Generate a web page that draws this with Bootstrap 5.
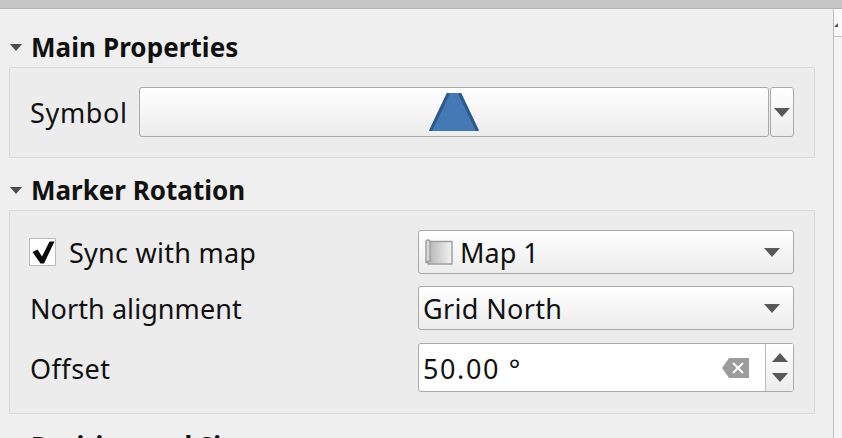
<!DOCTYPE html>
<html lang="en">
<head>
<meta charset="utf-8">
<title>Marker properties</title>
<link href="https://cdn.jsdelivr.net/npm/bootstrap@5.3.0/dist/css/bootstrap.min.css" rel="stylesheet">
<style>
html,body{height:438px;overflow:hidden}
body{background:#efefef;color:#111;font-family:"Noto Sans","Open Sans",sans-serif;font-size:27px;line-height:34px}
.topstrip{height:9px;background:#c6c6c6;border-bottom:1px solid #b4b4b4}
.sbar{width:9px;flex:none;border-left:1px solid #bdbdbd;background:#f4f4f4}
.sbar-btn{height:28px;border-bottom:1px solid #c4c4c4;background:#fafafa;padding:14px 0 0 0}
.sbar-btn i{display:block;width:0;height:0;border-left:4px solid transparent;border-bottom:4px solid #555}
.pane{padding:0 18px 0 9px;min-width:0;overflow:hidden}
.head{height:34px;font-weight:700;font-size:26px;line-height:34px;white-space:nowrap}
.head-a{margin-top:21px;margin-bottom:3px;letter-spacing:.08px}
.head-b{margin-top:15px;margin-bottom:3px}
.head-c{margin-top:15px;height:9px;overflow:hidden}
.tri{width:22px;flex:none;padding-left:1px}
.tri i{display:block;width:0;height:0;border-left:6px solid transparent;border-right:6px solid transparent;border-top:7px solid #4d4d4d}
.gbox{background:#ececec;border:1px solid #d9d9d9;border-radius:2px}
.gbox-a{height:91px;padding:19px 20px 0 19px}
.gbox-b{height:204px;padding:19px 20px 0 19px}
.lbl{width:389px;flex:none;white-space:nowrap;padding:2px 0 0 1px}
.lbl-flush{padding:0}
.lbl-sym{width:110px;flex:none;padding:2px 0 0 1px;letter-spacing:.65px}
.ls-sync{padding-top:2px;letter-spacing:.25px}
.ls-north{letter-spacing:.07px}
.ls-offset{letter-spacing:.5px}
.grad{background:linear-gradient(#fff,#ececec);border:1px solid #aaa;border-radius:3px}
.symbtn{height:50px;padding-top:5px}
.symbtn svg{display:block}
.symdrop{width:24px;height:50px;flex:none;margin-left:1px}
.tri-sm{display:block;flex:none;width:0;height:0;border-left:8px solid transparent;border-right:8px solid transparent;border-top:9px solid #595959}
.combo{height:44px;padding:0 5px 0 4px;white-space:nowrap}
.combotext{flex-grow:1;padding-top:2px}
.ls-grid{letter-spacing:.35px}
.mapico{flex:none;margin:0 7px 0 2px}
.spin{height:49px;background:#fff;border:1px solid #aaa;border-radius:3px}
.spin-val{padding:0 4px}
.spin-num{padding-top:2px;letter-spacing:1.6px}
.clearico{margin-right:12px}
.spin-arrows{width:28px;flex:none;border-left:1px solid #bbb;background:linear-gradient(#fff,#ececec);gap:11px}
.up{display:block;width:0;height:0;border-left:8px solid transparent;border-right:8px solid transparent;border-bottom:9px solid #595959}
.down{display:block;width:0;height:0;border-left:8px solid transparent;border-right:8px solid transparent;border-top:9px solid #595959}
.chk{width:27px;height:28px;flex:none;background:#fff;border:1px solid #bbb;margin-right:13px}
.rowb{height:44px}
.rowb + .rowb{margin-top:12px}
.rowc{height:49px;margin-top:13px}
</style>
</head>
<body>
<div class="topstrip"></div>
<div class="d-flex" style="height:429px">
  <div class="pane flex-grow-1">
    <div class="head head-a d-flex align-items-center"><span class="tri"><i></i></span>Main Properties</div>
    <div class="gbox gbox-a">
      <div class="d-flex align-items-center">
        <span class="lbl-sym">Symbol</span>
        <div class="grad symbtn flex-grow-1 d-flex justify-content-center">
          <svg width="50" height="38" viewBox="0 0 50 38"><path d="M18 0H32L50 38H0Z" fill="#4479b5"/><path d="M19.500 0L1.500 38M30.500 0L48.500 38" stroke="#2c5a8c" stroke-width="3" fill="none"/></svg>
        </div>
        <div class="grad symdrop d-flex align-items-center justify-content-center"><i class="tri-sm"></i></div>
      </div>
    </div>
    <div class="head head-b d-flex align-items-center"><span class="tri"><i></i></span>Marker Rotation</div>
    <div class="gbox gbox-b">
      <div class="rowb d-flex align-items-center">
        <div class="lbl lbl-flush d-flex align-items-center">
          <span class="chk d-flex align-items-center justify-content-center"><svg width="25" height="26" viewBox="0 0 25 26"><path d="M2.500 13L7.500 10.500L12 17.500L19.500 2.500H24.500L14 24.500H10.500Z" fill="#0a0a0a"/></svg></span><span class="ls-sync">Sync with map</span>
        </div>
        <div class="grad combo flex-grow-1 d-flex align-items-center">
          <svg width="28" height="27" viewBox="0 0 28 27" class="mapico"><defs><linearGradient id="mapg"><stop offset="0" stop-color="#b4b4b4"/><stop offset="1" stop-color="#f2f2f2"/></linearGradient></defs><rect x="3" y="2.500" width="24" height="22.500" fill="url(#mapg)" stroke="#a0a0a0" stroke-width="1.500"/><path d="M1 3Q1 1 3 1Q5 1 5 3V22Q2 22 1 24Z" fill="#d8d8d8" stroke="#a0a0a0" stroke-width="1.500"/></svg>
          <span class="combotext">Map 1</span><i class="tri-sm me-2"></i>
        </div>
      </div>
      <div class="rowb d-flex align-items-center">
        <div class="lbl ls-north">North alignment</div>
        <div class="grad combo flex-grow-1 d-flex align-items-center">
          <span class="combotext ls-grid">Grid North</span><i class="tri-sm me-2"></i>
        </div>
      </div>
      <div class="rowc d-flex align-items-center">
        <div class="lbl ls-offset">Offset</div>
        <div class="spin flex-grow-1 d-flex align-items-stretch">
          <div class="spin-val flex-grow-1 d-flex align-items-center justify-content-between">
            <span class="spin-num">50.00 °</span>
            <svg width="27" height="20" viewBox="0 0 27 20" class="clearico"><path d="M7 0H27V20H7L0 10Z" fill="#9c9c9c"/><path d="M11 5L21 15M21 5L11 15" stroke="#fff" stroke-width="2"/></svg>
          </div>
          <div class="spin-arrows d-flex flex-column align-items-center justify-content-center"><i class="up"></i><i class="down"></i></div>
        </div>
      </div>
    </div>
    <div class="head head-c d-flex align-items-start"><span class="tri"></span>Position and Size</div>
  </div>
  <div class="sbar"><div class="sbar-btn"><i></i></div></div>
</div>
</body>
</html>
